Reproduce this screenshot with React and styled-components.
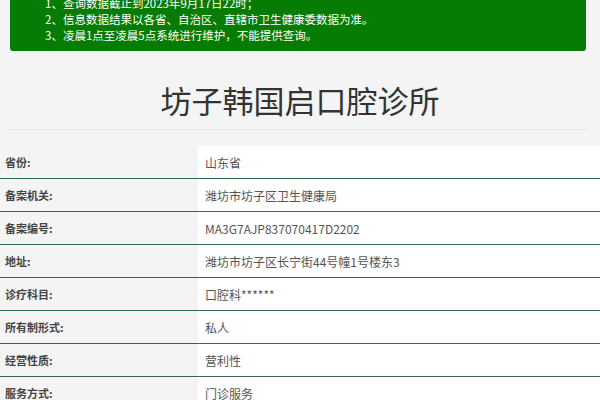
import React from 'react';
import styled, { createGlobalStyle } from 'styled-components';

const Global = createGlobalStyle`
  html, body { margin: 0; padding: 0; background: #f4f4f4; overflow: hidden; }
  body { font-family: "Noto Sans CJK SC", "Liberation Sans", sans-serif; }
`;

const Page = styled.div`
  width: 600px;
`;

const Notice = styled.div`
  margin: -11px 14px 0 10px;
  padding: 6px 0 8px 35px;
  background: #067c05;
  border-radius: 3px;
  color: #fff;
  font-size: 11.5px;
  line-height: 16px;
`;

const Title = styled.h1`
  margin: 29px 0 0;
  text-align: center;
  font-weight: 400;
  font-size: 31px;
  line-height: 40px;
  color: #333;
`;

const Rule = styled.hr`
  margin: 9px 13px 16px 7px;
  border: 0;
  border-top: 1px solid #e8e8e8;
`;

const Table = styled.div`
  display: grid;
  grid-template-columns: 198px 1fr;
`;

const Cell = styled.div`
  height: 32px;
  display: flex;
  align-items: center;
  border-bottom: ${p => (p.$last ? 'none' : '1px solid #2f6a4c')};
  background: ${p => (p.$value ? '#fff' : '#f4f4f4')};
  padding-left: ${p => (p.$value ? '7px' : '5px')};
  font-size: ${p => (p.$value ? '12px' : '11px')};
  font-weight: ${p => (p.$value ? 400 : 600)};
  color: ${p => (p.$value ? '#555' : '#444')};
`;

const rows = [
  ['省份:', '山东省'],
  ['备案机关:', '潍坊市坊子区卫生健康局'],
  ['备案编号:', 'MA3G7AJP837070417D2202'],
  ['地址:', '潍坊市坊子区长宁街44号幢1号楼东3'],
  ['诊疗科目:', '口腔科******'],
  ['所有制形式:', '私人'],
  ['经营性质:', '营利性'],
  ['服务方式:', '门诊服务'],
];

export default function App() {
  return (
    <Page>
      <Global />
      <Notice>
        <div>1、查询数据截止到2023年9月17日22时；</div>
        <div>2、信息数据结果以各省、自治区、直辖市卫生健康委数据为准。</div>
        <div>3、凌晨1点至凌晨5点系统进行维护，不能提供查询。</div>
      </Notice>
      <Title>坊子韩国启口腔诊所</Title>
      <Rule />
      <Table>
        {rows.map(([k, v], i) => (
          <React.Fragment key={k}>
            <Cell $last={i === rows.length - 1}>{k}</Cell>
            <Cell $value $last={i === rows.length - 1}>{v}</Cell>
          </React.Fragment>
        ))}
      </Table>
    </Page>
  );
}
